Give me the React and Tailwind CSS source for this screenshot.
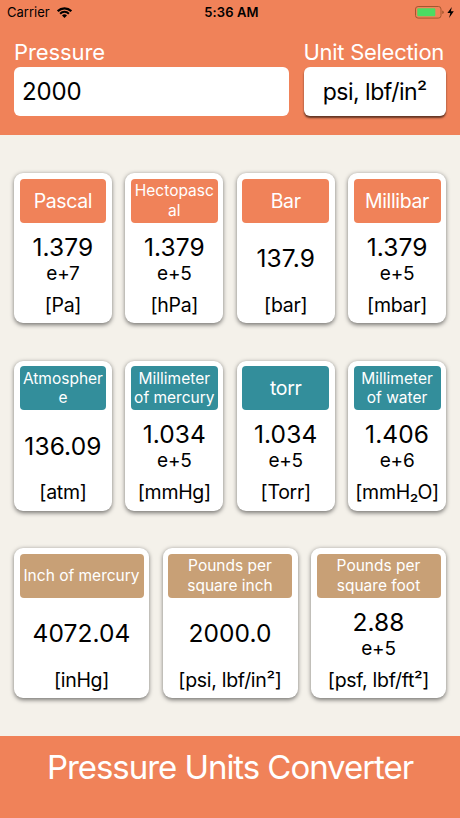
const rows = [
  {
    color: "bg-[#f08259]",
    cards: [
      { name: "Pascal", value: "1.379", exp: "e+7", unit: "[Pa]" },
      { name: "Hectopascal", lines: ["Hectopasc", "al"], value: "1.379", exp: "e+5", unit: "[hPa]" },
      { name: "Bar", value: "137.9", unit: "[bar]" },
      { name: "Millibar", value: "1.379", exp: "e+5", unit: "[mbar]" },
    ],
  },
  {
    color: "bg-[#338e9b]",
    cards: [
      { name: "Atmosphere", lines: ["Atmospher", "e"], value: "136.09", unit: "[atm]" },
      { name: "Millimeter of mercury", lines: ["Millimeter", "of mercury"], value: "1.034", exp: "e+5", unit: "[mmHg]" },
      { name: "torr", value: "1.034", exp: "e+5", unit: "[Torr]" },
      { name: "Millimeter of water", lines: ["Millimeter", "of water"], value: "1.406", exp: "e+6", unit: "[mmH₂O]" },
    ],
  },
  {
    color: "bg-[#c8a076]",
    cards: [
      { name: "Inch of mercury", lines: ["Inch of mercury"], value: "4072.04", unit: "[inHg]" },
      { name: "Pounds per square inch", lines: ["Pounds per", "square inch"], value: "2000.0", unit: "[psi, lbf/in²]" },
      { name: "Pounds per square foot", lines: ["Pounds per", "square foot"], value: "2.88", exp: "e+5", unit: "[psf, lbf/ft²]" },
    ],
  },
];

function StatusBar() {
  return (
    <div className="grid h-[25px] grid-cols-3 items-center pr-[5px] pl-[7px] text-[13px] text-black">
      <div className="flex items-center gap-[7px]">
        <span>Carrier</span>
        <svg width="15" height="11" viewBox="0 0 15 11" fill="none">
          <path d="M0.7 4.1 A9.6 9.6 0 0 1 14.3 4.1" stroke="black" strokeWidth="2.2" />
          <path d="M3.1 6.7 A6.2 6.2 0 0 1 11.9 6.7" stroke="black" strokeWidth="2" />
          <path d="M5 8.4 A3.6 3.6 0 0 1 10 8.4 L7.5 10.9 Z" fill="black" />
        </svg>
      </div>
      <div className="pl-px text-center font-semibold tracking-[0.1px] whitespace-nowrap">5:36 AM</div>
      <div className="flex items-center justify-end">
        <svg width="40" height="14" viewBox="0 0 40 14">
          <rect x="0.5" y="0.5" width="25.5" height="11.6" rx="2.6" fill="none" stroke="#a4572f" strokeWidth="1" />
          <rect x="2.3" y="2.3" width="18" height="8" rx="1" fill="#4cdb62" />
          <path d="M27.2 4.5 Q28.8 4.8 28.8 6.3 T27.2 8.1 Z" fill="#a4572f" />
          <path d="M36.8 0.9 L32.4 7 H35.3 L34.1 11.9 L38.8 5.3 H35.9 Z" fill="black" />
        </svg>
      </div>
    </div>
  );
}

function UnitCard({ card, color }) {
  return (
    <div className="flex h-[150px] min-w-0 flex-1 flex-col rounded-[9px] bg-white p-[5.5px] text-center text-black shadow-[0_1.5px_4px_rgba(0,0,0,0.5)]">
      {/* NAME */}
      <div className={`flex h-11 flex-col items-center justify-center rounded-[4px] text-white ${color}`}>
        {card.lines ? (
          card.lines.map((line) => (
            <span key={line} className="text-[15.5px] leading-[19.5px] whitespace-nowrap">
              {line}
            </span>
          ))
        ) : (
          <span className="text-[19.5px] leading-6 tracking-[-0.35px]">{card.name}</span>
        )}
      </div>

      {/* VALUE */}
      <div className="flex h-[71px] flex-col items-center justify-center">
        <span className="text-[24.5px] leading-[30px] tracking-[0.1px]">{card.value}</span>
        {card.exp && <span className="text-[19px] leading-[23px] tracking-[-0.2px]">{card.exp}</span>}
      </div>

      {/* UNIT */}
      <div className="text-[19.5px] leading-[23.5px] tracking-[-0.3px] whitespace-nowrap">{card.unit}</div>
    </div>
  );
}

export default function App() {
  return (
    <div className="flex h-[818px] w-[460px] flex-col overflow-hidden bg-[#f4f1ea] font-['Inter',sans-serif]">
      {/* Header */}
      <header className="h-[135px] bg-[#f08259]">
        <StatusBar />
        <div className="flex justify-between px-3.5 pt-[13px]">
          <div className="w-[275px]">
            <label className="block text-[22px] leading-[29px] tracking-[-0.1px] text-white">Pressure</label>
            <div className="flex h-[49px] items-center rounded-[6px] bg-white pl-2 text-2xl tracking-[-0.1px] text-black">
              2000
            </div>
          </div>
          <div className="w-[142.5px]">
            <label className="block text-[22px] leading-[29px] tracking-[-0.28px] whitespace-nowrap text-white">
              Unit Selection
            </label>
            <button className="flex h-[49px] w-full items-center justify-center rounded-[6px] bg-white pt-0.5 text-[23px] tracking-[-0.5px] text-black shadow-[0_2px_2px_rgba(0,0,0,0.6)]">
              psi, lbf/in²
            </button>
          </div>
        </div>
      </header>

      {/* Cards */}
      <main className="flex flex-1 flex-col gap-[37.5px] px-3.5 pt-[38px]">
        {rows.map((row) => (
          <div key={row.color} className="flex gap-[13.5px]">
            {row.cards.map((card) => (
              <UnitCard key={card.name} card={card} color={row.color} />
            ))}
          </div>
        ))}
      </main>

      {/* Footer */}
      <footer className="h-[82px] bg-[#f08259] pt-[10px] text-center text-[33px] leading-[42px] tracking-[-1.05px] text-white">
        Pressure Units Converter
      </footer>
    </div>
  );
}
